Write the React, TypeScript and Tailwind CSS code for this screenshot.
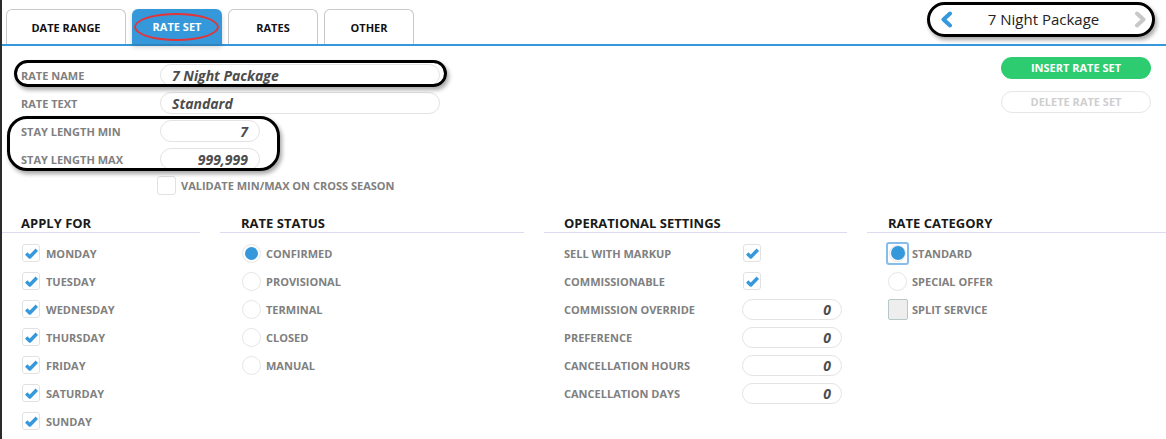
import React from "react";

const CheckIcon = () => (
  <svg width="13" height="11" viewBox="0 0 13 11" className="text-[#3498db]">
    <path d="M1.2 5.6 L4.8 9 L11.8 1.8" fill="none" stroke="currentColor" strokeWidth="3.4" strokeLinejoin="round" />
  </svg>
);

const Chevron = ({ dir, color }: { dir: "l" | "r"; color: string }) => (
  <svg width="15" height="17" viewBox="0 0 15 17" className={color}>
    <path
      d={dir === "l" ? "M11 2.5 L4.5 8.5 L11 14.5" : "M4 2.5 L10.5 8.5 L4 14.5"}
      fill="none"
      stroke="currentColor"
      strokeWidth="4"
      strokeLinecap="round"
      strokeLinejoin="round"
    />
  </svg>
);

const Checkbox = ({ checked }: { checked?: boolean }) => (
  <div className="w-[18px] h-[18px] shrink-0 rounded-[3px] border border-[#e2e2e2] bg-white flex items-center justify-center">
    {checked && <CheckIcon />}
  </div>
);

const Radio = ({ checked }: { checked?: boolean }) => (
  <div className="w-[19px] h-[19px] shrink-0 rounded-full border border-[#e6e6e6] bg-white flex items-center justify-center">
    {checked && <div className="w-[13px] h-[13px] rounded-full bg-[#3498db]" />}
  </div>
);

const Label = ({ children, w }: { children: React.ReactNode; w?: string }) => (
  <span className={`text-[11px] font-bold text-[#808080] leading-none whitespace-nowrap ${w ?? ""}`}>{children}</span>
);

const Header = ({ children, pl }: { children: React.ReactNode; pl: string }) => (
  <div className={`h-[19px] leading-[18px] text-[13px] font-bold text-[#1a1a1a] border-b border-[#dcdcf0] ${pl}`}>{children}</div>
);

const Tab = ({ label, active, w }: { label: string; active?: boolean; w: string }) => (
  <div
    className={`${w} h-[35px] pt-[2px] rounded-t-[6px] flex items-center justify-center text-[11px] font-bold ${
      active
        ? "bg-[#3498db] text-white shadow-[0_3px_5px_rgba(0,0,0,0.18)]"
        : "bg-white text-[#111] border border-b-0 border-[#c9c9c9]"
    }`}
  >
    {label}
  </div>
);

export default function App() {
  const days = ["MONDAY", "TUESDAY", "WEDNESDAY", "THURSDAY", "FRIDAY", "SATURDAY", "SUNDAY"];
  const statuses = ["CONFIRMED", "PROVISIONAL", "TERMINAL", "CLOSED", "MANUAL"];
  const opsInputs = ["COMMISSION OVERRIDE", "PREFERENCE", "CANCELLATION HOURS", "CANCELLATION DAYS"];

  return (
    <div className="relative w-[1166px] h-[439px] overflow-hidden bg-white border-l-2 border-[#2b2b2b] font-['Open_Sans','Noto_Sans',sans-serif]">
      {/* header */}
      <div className="flex justify-between items-start h-[46px] border-b-2 border-[#3498db]">
        <div className="flex items-end gap-[6px] pl-[4px] pt-[9px]">
          <Tab label="DATE RANGE" w="w-[120px]" />
          <Tab label="RATE SET" w="w-[90px]" active />
          <Tab label="RATES" w="w-[90px]" />
          <Tab label="OTHER" w="w-[90px]" />
        </div>
        <div className="mt-[2px] mr-[11px] w-[228px] h-[35px] rounded-full border-[3px] border-black bg-white shadow-[2px_3px_4px_rgba(0,0,0,0.35)] flex items-center pl-[9px] pr-[4px]">
          <Chevron dir="l" color="text-[#3498db]" />
          <span className="flex-1 text-center text-[15px] text-[#222] leading-none">7 Night Package</span>
          <Chevron dir="r" color="text-[#c8c8c8]" />
        </div>
      </div>

      {/* body */}
      <div className="flex justify-between pt-[11px]">
        <div className="pl-[19px] pt-[7px]">
          <div className="flex items-center h-[22px] mb-[6px]">
            <Label w="w-[139px]">RATE NAME</Label>
            <div className="w-[280px] h-[22px] rounded-full border border-[#e3e3e3] px-[11px] flex items-center text-[14px] font-bold italic text-[#4d4d4d]">
              7 Night Package
            </div>
          </div>
          <div className="flex items-center h-[22px] mb-[6px]">
            <Label w="w-[139px]">RATE TEXT</Label>
            <div className="w-[280px] h-[22px] rounded-full border border-[#e3e3e3] px-[11px] flex items-center text-[14px] font-bold italic text-[#4d4d4d]">
              Standard
            </div>
          </div>
          <div className="flex items-center h-[22px] mb-[6px]">
            <Label w="w-[139px]">STAY LENGTH MIN</Label>
            <div className="w-[100px] h-[22px] rounded-full border border-[#e3e3e3] px-[11px] flex items-center justify-end text-[14px] font-bold italic text-[#4d4d4d]">
              7
            </div>
          </div>
          <div className="flex items-center h-[22px] mb-[6px]">
            <Label w="w-[139px]">STAY LENGTH MAX</Label>
            <div className="w-[100px] h-[22px] rounded-full border border-[#e3e3e3] px-[11px] flex items-center justify-end text-[14px] font-bold italic text-[#4d4d4d]">
              999,999
            </div>
          </div>
          <div className="flex items-center gap-[5px] mt-[1px] ml-[136px] h-[19px]">
            <div className="w-[19px] h-[19px] rounded-[3px] border border-[#e2e2e2] bg-white" />
            <Label>VALIDATE MIN/MAX ON CROSS SEASON</Label>
          </div>
        </div>

        <div className="flex flex-col pr-[15px]">
          <div className="w-[150px] h-[22px] rounded-full bg-[#2ecc71] text-white text-[11px] font-bold flex items-center justify-center">
            INSERT RATE SET
          </div>
          <div className="mt-[12px] w-[150px] h-[22px] rounded-full border border-[#e6e6e6] bg-white text-[#cfcfcf] text-[11px] font-bold flex items-center justify-center">
            DELETE RATE SET
          </div>
        </div>
      </div>

      {/* sections */}
      <div className="grid grid-cols-[198px_304px_303px_1fr] gap-x-5 mt-[19px]">
        <div>
          <Header pl="pl-[19px]">APPLY FOR</Header>
          <div className="mt-[6px] pl-[20px]">
            {days.map((d) => (
              <div key={d} className="h-[28px] flex items-center gap-[6px]">
                <Checkbox checked />
                <Label>{d}</Label>
              </div>
            ))}
          </div>
        </div>

        <div>
          <Header pl="pl-[21px]">RATE STATUS</Header>
          <div className="mt-[6px] pl-[22px]">
            {statuses.map((s, i) => (
              <div key={s} className="h-[28px] flex items-center gap-[5px]">
                <Radio checked={i === 0} />
                <Label>{s}</Label>
              </div>
            ))}
          </div>
        </div>

        <div>
          <Header pl="pl-[20px]">OPERATIONAL SETTINGS</Header>
          <div className="mt-[6px] pl-[20px]">
            <div className="h-[28px] flex items-center">
              <Label w="w-[179px]">SELL WITH MARKUP</Label>
              <Checkbox checked />
            </div>
            <div className="h-[28px] flex items-center">
              <Label w="w-[179px]">COMMISSIONABLE</Label>
              <Checkbox checked />
            </div>
            {opsInputs.map((o) => (
              <div key={o} className="h-[28px] flex items-center">
                <Label w="w-[178px]">{o}</Label>
                <div className="w-[100px] h-[21px] rounded-full border border-[#e3e3e3] px-[10px] flex items-center justify-end text-[14px] font-bold italic text-[#4d4d4d]">
                  0
                </div>
              </div>
            ))}
          </div>
        </div>

        <div>
          <Header pl="pl-[21px]">RATE CATEGORY</Header>
          <div className="mt-[6px] pl-[21px]">
            <div className="h-[28px] flex items-center gap-[5px]">
              <div className="-m-[2px] p-[1px] rounded-[3px] border-2 border-[#86bdea]">
                <div className="w-[17px] h-[17px] rounded-full border border-[#e6e6e6] bg-white flex items-center justify-center">
                  <div className="w-[14px] h-[14px] rounded-full bg-[#3498db]" />
                </div>
              </div>
              <Label>STANDARD</Label>
            </div>
            <div className="h-[28px] flex items-center gap-[5px]">
              <Radio />
              <Label>SPECIAL OFFER</Label>
            </div>
            <div className="h-[28px] flex items-center gap-[4px]">
              <div className="w-[20px] h-[21px] rounded-[2px] border border-[#b7c8c8] bg-[#eeeeee]" />
              <Label>SPLIT SERVICE</Label>
            </div>
          </div>
        </div>
      </div>

      {/* annotation overlays */}
      <div className="absolute left-[132px] top-[13px] w-[85px] h-[28px] rounded-[50%] border-2 border-[#e2353a]" />
      <div className="absolute left-[12px] top-[60px] w-[433px] h-[27px] rounded-full border-[3px] border-black shadow-[2px_3px_4px_rgba(0,0,0,0.35)]" />
      <div className="absolute left-[5px] top-[116px] w-[273px] h-[55px] rounded-[20px] border-[3px] border-black shadow-[2px_3px_4px_rgba(0,0,0,0.35)]" />
    </div>
  );
}
